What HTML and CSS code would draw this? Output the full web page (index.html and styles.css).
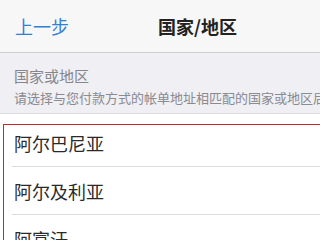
FILE: index.html
```html
<!DOCTYPE html>
<html lang="zh-CN">

<head>
    <meta charset="UTF-8">
    <meta name="viewport" content="width=device-width, initial-scale=1.0">
    <title>国家/地区</title>
    <link rel="stylesheet" href="styles.css">
</head>

<body>
    <header class="navbar">
        <a href="" class="navbar__back">上一步</a>
        <h1 class="navbar__title">国家/地区</h1>
    </header>
    <main>
        <section class="group-head">
            <h2 class="group-head__title">国家或地区</h2>
            <p class="group-head__desc">请选择与您付款方式的帐单地址相匹配的国家或地区后继续</p>
        </section>
        <section class="list-wrap">
            <ul class="list">
                <li>阿尔巴尼亚</li>
                <li>阿尔及利亚</li>
                <li>阿富汗</li>
                <li>阿根廷</li>
            </ul>
            <div class="highlight"></div>
        </section>
    </main>
</body>
</html>
```

FILE: styles.css
```css
* {
    box-sizing: border-box;
}

html,
body {
    margin: 0;
    padding: 0;
    height: 100%;
    overflow: hidden;
}

body {
    background-color: #efeff4;
    font-family: "Noto Sans CJK SC", "Noto Sans", sans-serif;
    color: #1c1c1e;
}

.navbar {
    display: flex;
    align-items: center;
    height: 53px;
    padding-left: 15px;
    background-color: #f7f7f8;
    border-bottom: 1px solid #cfcfd3;
}

.navbar__back {
    font-size: 18px;
    color: #2f80d8;
    text-decoration: none;
}

.navbar__title {
    margin: 0 0 0 89px;
    font-size: 18px;
    font-weight: 600;
    color: #222;
}

.group-head {
    padding: 12px 0 6px 14px;
    border-bottom: 1px solid #dcdce0;
    white-space: nowrap;
    overflow: hidden;
}

.group-head__title {
    margin: 0;
    font-size: 15px;
    font-weight: 400;
    line-height: 22px;
    color: #86868b;
}

.group-head__desc {
    margin: 2px 0 0;
    font-size: 13px;
    line-height: 18px;
    color: #8a8a8f;
}

.list-wrap {
    position: relative;
    background-color: #fff;
}

.list {
    list-style-type: none;
    margin: 0;
    padding: 5px 0 0;
}

.list li {
    display: flex;
    align-items: center;
    height: 48px;
    margin-left: 12px;
    padding-left: 2px;
    font-size: 18px;
    color: #2a2a2a;
    border-bottom: 1px solid #dcdcdf;
}

.highlight {
    position: absolute;
    top: 10px;
    left: 3px;
    right: -10px;
    height: 200px;
    border: 1px solid #c8282a;
    pointer-events: none;
}
```
